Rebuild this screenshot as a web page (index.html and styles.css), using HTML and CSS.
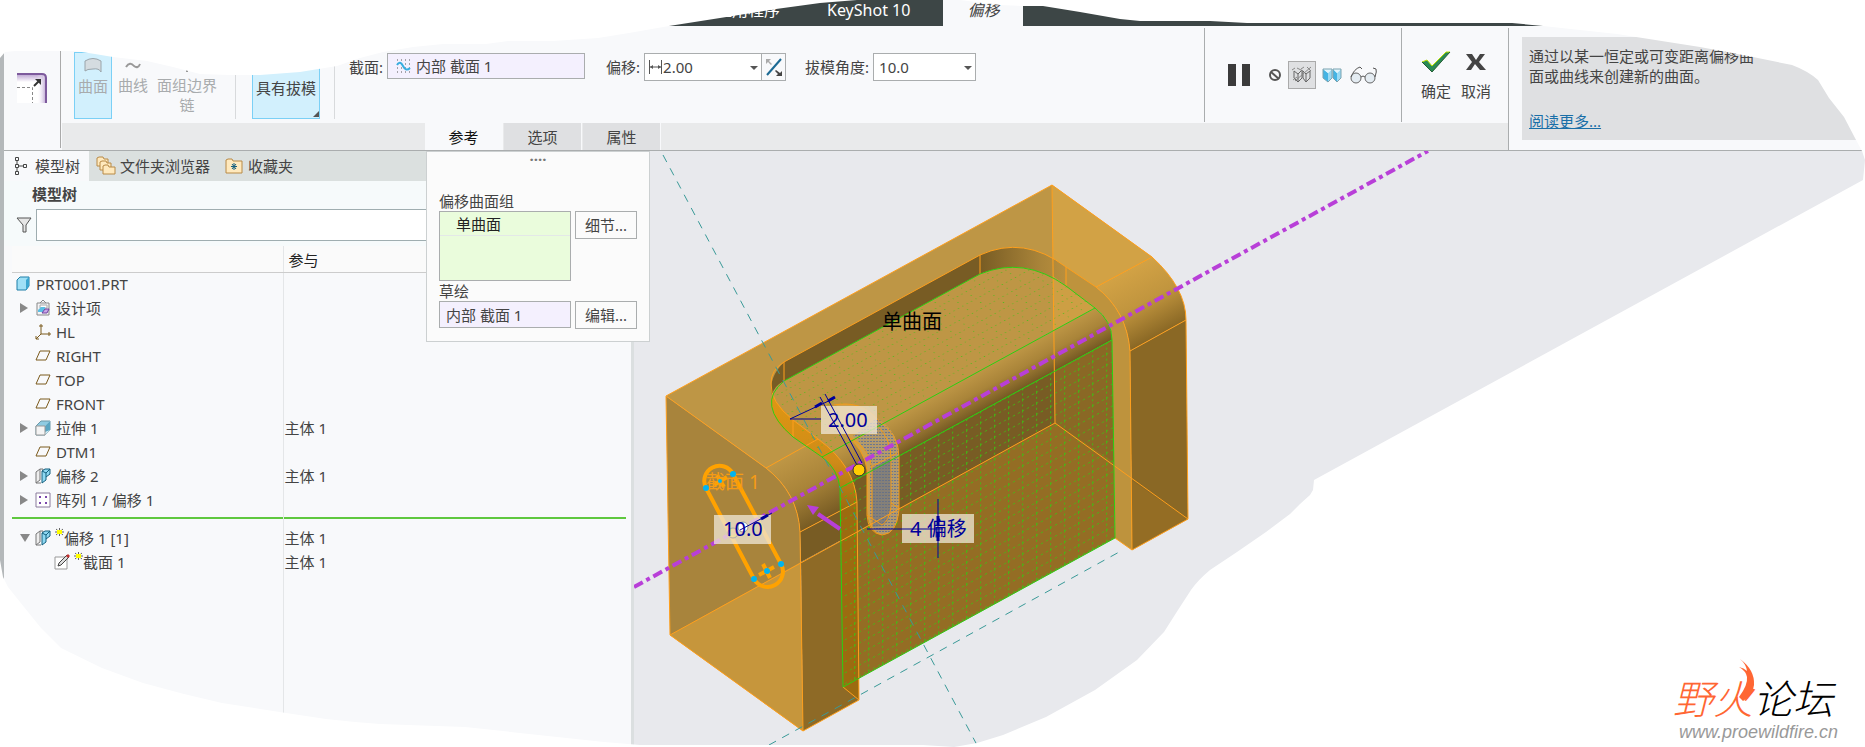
FILE: index.html
```html
<!DOCTYPE html>
<html lang="zh-CN">
  <head>
    <meta charset="UTF-8" />
    <title>偏移</title>
    <meta name="viewport" content="width=device-width, initial-scale=1" />
    <link rel="stylesheet" href="styles.css">
  </head>
  <body>
    <div class="app">
      <nav class="titlebar">
        <button class="title-tab">应用程序</button>
        <button class="title-tab">KeyShot 10</button>
        <button class="title-tab active">偏移</button>
      </nav>

      <header class="ribbon">
        <div class="feature-icon">
          <svg width="30" height="30" viewBox="0 0 30 30">
            <defs>
              <linearGradient id="edgeV" x1="0" x2="0" y1="0" y2="1"><stop offset="0" stop-color="#b9a0d0"/><stop offset="1" stop-color="#fff"/></linearGradient>
              <linearGradient id="edgeH" x1="1" x2="0" y1="0" y2="0"><stop offset="0" stop-color="#b9a0d0"/><stop offset="1" stop-color="#fff" stop-opacity="0"/></linearGradient>
            </defs>
            <path d="M0 0h26q4 0 4 4v26H0z" fill="#fff"/>
            <path d="M0 1h26v8H0z" fill="url(#edgeV)"/>
            <path d="M20 2h9v28h-9z" fill="url(#edgeH)"/>
            <path d="M0 1h25q4 0 4 4v25" fill="none" stroke="#7d5a9c" stroke-width="2"/>
            <path d="M0 14.500h15.500V30" fill="none" stroke="#888" stroke-dasharray="3 2"/>
            <path d="M17 13l5-5" stroke="#333" stroke-width="2"/>
            <path d="M18 6h6v6z" fill="#333"/>
          </svg>
        </div>

        <div class="dashboard">
          <div class="controls">
            <div class="buttons">
              <button class="tool on" disabled>
                <svg width="18" height="16" viewBox="0 0 18 16"><path d="M1 4q8-5 16 0v11q-2-4-8-3-6 0-8 2z" fill="#d5dce0" stroke="#9aa4aa"/></svg>
                曲面
              </button>
              <button class="tool" disabled>
                <svg width="18" height="16" viewBox="0 0 18 16"><path d="M2 11q4-6 8-1 4 3 6-2" fill="none" stroke="#999" stroke-width="2"/></svg>
                曲线
              </button>
              <button class="tool wide" disabled>
                <svg width="18" height="16" viewBox="0 0 18 16"><path d="M9 13v3" stroke="#999" stroke-width="2"/></svg>
                面组边界链
              </button>
            </div>
            <div class="buttons">
              <button class="tool on draft">具有拔模</button>
            </div>
            <div class="fields">
              <label for="section">截面:</label>
              <div class="collector section">
                <svg width="15" height="15" viewBox="0 0 15 15"><path d="M1 1h14M1 5h14M1 9h14M1 13h14" stroke="#555" stroke-dasharray="1 3"/><path d="M1 6q3-5 6 1 3 6 7 2" fill="none" stroke="#37aee0" stroke-width="2"/></svg>
                <input id="section" value="内部 截面 1" readonly>
              </div>
              <label for="offset">偏移:</label>
              <div class="combo offset">
                <svg width="15" height="16" viewBox="0 0 15 16"><path d="M1.500 1v14M13.500 1v14M2 8h11" fill="none" stroke="#555"/><path d="M2 8l3-2v4zM13 8l-3-2v4z" fill="#555"/></svg>
                <select id="offset"><option>2.00</option></select>
              </div>
              <button class="flip" aria-label="反向">
                <svg width="18" height="20" viewBox="0 0 18 20"><path d="M2 18L16 2" stroke="#1c6a94" stroke-width="2"/><path d="M1 2h5l-2 2 3 3-1 1-3-3-2 2z" fill="#aaa"/><path d="M17 19h-6l2-2-3-3 1-1 4 3 2-2z" fill="#444"/></svg>
              </button>
              <label for="angle">拔模角度:</label>
              <div class="combo angle">
                <select id="angle"><option>10.0</option></select>
              </div>
            </div>

            <div class="preview">
              <button aria-label="暂停"><svg width="22" height="22" viewBox="0 0 22 22"><path d="M0 0h8v22H0zM14 0h8v22h-8z" fill="#3b3b3b"/></svg></button>
              <button aria-label="无预览"><svg width="14" height="14" viewBox="0 0 14 14"><circle cx="7" cy="7" r="5" fill="none" stroke="#555" stroke-width="2"/><path d="M3 4l8 7" stroke="#555" stroke-width="2"/></svg></button>
              <button class="pressed" aria-label="分离"><svg width="20" height="18" viewBox="0 0 20 18"><path d="M2 5l4 3v8l-4-4zM6 8l4-4v8l-4 4M11 5l3 3v8l-3-4zM14 8l4-3v7l-4 4" fill="none" stroke="#666"/><path d="M0 4l3-2M5 2l6 3M9 3l3-2M15 1l4 4M3 15L19 1M1 14l4-3" fill="none" stroke="#888"/></svg></button>
              <button aria-label="连接"><svg width="20" height="15" viewBox="0 0 20 15"><path d="M1 1l5 4v9l-5-4zM11 1l4 4v9l-4-4z" fill="#45b4e4"/><path d="M6 5l4-4v9l-4 4zM15 5l4-4v9l-4 4z" fill="#9bdaf4"/><path d="M1 1h9l-4 4zM11 1h8l-4 4z" fill="#e3f5fc"/><path d="M1 1h9v9l-4 4-5-4zM11 1h8v9l-4 4-4-4z" fill="none" stroke="#7ba3b0"/></svg></button>
              <button aria-label="验证"><svg width="28" height="18" viewBox="0 0 28 18"><g fill="#e4ecf2" stroke="#666"><circle cx="6" cy="12" r="5"/><circle cx="20" cy="12" r="5"/></g><path d="M11 11q2-2 4 0M1 11Q4 3 10 1l2 2M25 11q2-6 1-8l-3-1" fill="none" stroke="#555"/></svg></button>
            </div>
            <div class="finish">
              <button>
                <svg width="30" height="22" viewBox="0 0 30 22"><path d="M1 11l5-2 5 6L25 1h4L11 21z" fill="#2a8a55"/><path d="M1 11l5-2 5 6L25 1h4" fill="none" stroke="#b7e000" stroke-width="1"/><path d="M29 1L11 21 1 11" fill="none" stroke="#255d35"/></svg>
                确定
              </button>
              <button>
                <svg width="22" height="22" viewBox="0 0 22 22"><path d="M1 3h6l4 6 4-6h5l-6 8 7 8h-6l-5-6-4 6H1l6-8z" fill="#444"/></svg>
                取消
              </button>
            </div>
          </div>
          <div class="panel-tabs">
            <button class="active">参考</button>
            <button>选项</button>
            <button>属性</button>
          </div>
        </div>

        <aside class="help">
          <div class="help-box">
            <p>通过以某一恒定或可变距离偏移曲面或曲线来创建新的曲面。</p>
            <a href="#help">阅读更多...</a>
          </div>
        </aside>
      </header>

      <main class="workspace">
        <section class="navigator">
          <div class="nav-tabs">
            <button class="active">
              <svg width="14" height="20" viewBox="0 0 14 20"><path d="M1.500 1.500h3v3h-3zM1.500 8.500h3v3h-3zM1.500 15.500h3v3h-3zM9.500 8.500h3v3h-3zM3 5v3M3 12v3M5 10h4" fill="none" stroke="#444"/></svg>
              模型树
            </button>
            <button>
              <svg width="20" height="20" viewBox="0 0 20 20"><g fill="#ffe9bd" stroke="#b88a46"><path d="M1 10V2l2-1h4l1 2h4v7z"/><path d="M4 14V6l2-1h4l1 2h4v7z"/><path d="M7 18v-8l2-1h3l1 2h6v7z"/></g></svg>
              文件夹浏览器
            </button>
            <button>
              <svg width="18" height="20" viewBox="0 0 18 20"><path d="M1 17V4l2-1h4l1 2h9v12z" fill="#ffe9bd" stroke="#b88a46"/><path d="M9 7v7M6 10.500h6M7 8l4 5M11 8l-4 5" stroke="#166080"/></svg>
              收藏夹
            </button>
          </div>
          <h1>模型树</h1>
          <div class="filter">
            <svg width="16" height="16" viewBox="0 0 16 16"><path d="M1 1h14L10 8v7H7V8z" fill="#e6e6e6" stroke="#555"/></svg>
            <input type="text" aria-label="筛选">
          </div>
          <div class="tree">
            <table>
              <colgroup><col class="col-name"><col></colgroup>
              <thead>
                <tr><th></th><th>参与</th></tr>
              </thead>
              <tbody>
                <tr><td><div class="node root"><svg class="icon" viewBox="0 0 16 16"><path d="M2 4l3-3h9v9l-3 4H2z" fill="#9fe0f6" stroke="#1e7fa8"/><path d="M11 4l3-3v9l-3 4z" fill="#3aa6d0"/></svg>PRT0001.PRT</div></td><td></td></tr>
                <tr><td><div class="node"><i class="arrow"></i><svg class="icon" viewBox="0 0 16 16"><path d="M2 3h12v12H2z" fill="#f4f4f6" stroke="#888"/><path d="M5 3l3-3 3 3" fill="none" stroke="#888"/><path d="M5 5h7v3H5z" fill="#fff" stroke="#aaa"/><path d="M3 10l3-3h4v2l-2 3H3z" fill="#5bbfe4"/><path d="M7 13l3-4h4l-2 4z" fill="#c9a8e8" stroke="#7140a0"/></svg>设计项</div></td><td></td></tr>
                <tr><td><div class="node"><i class="arrow none"></i><svg class="icon" viewBox="0 0 16 16"><path d="M6 0v10h10M6 10l-5 5M4 2h4M14 8v4M1 12v3h3" fill="none" stroke="#7b5a1c"/></svg>HL</div></td><td></td></tr>
                <tr><td><div class="node"><i class="arrow none"></i><svg class="icon" viewBox="0 0 16 16"><path d="M5 3h10l-4 9H1z" fill="none" stroke="#7b5a1c"/></svg>RIGHT</div></td><td></td></tr>
                <tr><td><div class="node"><i class="arrow none"></i><svg class="icon" viewBox="0 0 16 16"><path d="M5 3h10l-4 9H1z" fill="none" stroke="#7b5a1c"/></svg>TOP</div></td><td></td></tr>
                <tr><td><div class="node"><i class="arrow none"></i><svg class="icon" viewBox="0 0 16 16"><path d="M5 3h10l-4 9H1z" fill="none" stroke="#7b5a1c"/></svg>FRONT</div></td><td></td></tr>
                <tr><td><div class="node"><i class="arrow"></i><svg class="icon" viewBox="0 0 16 16"><path d="M1 6l5-5h9v9l-5 5H1z" fill="#8fcbe2" stroke="#6b98a8"/><path d="M10 6l5-5v9l-5 5z" fill="#d5eef6"/><path d="M10 6l5-5v9l-5 2z" fill="#5aa5c2"/><path d="M1 6h9v9H1z" fill="#f4f4f4" stroke="#999"/></svg>拉伸 1</div></td><td>主体 1</td></tr>
                <tr><td><div class="node"><i class="arrow none"></i><svg class="icon" viewBox="0 0 16 16"><path d="M5 3h10l-4 9H1z" fill="none" stroke="#7b5a1c"/></svg>DTM1</div></td><td></td></tr>
                <tr><td><div class="node"><i class="arrow"></i><svg class="icon" viewBox="0 0 16 16"><path d="M1 4l4-3v11l-4 3z" fill="#eee" stroke="#777"/><path d="M1 15h5M5 1h3v3" fill="none" stroke="#777"/><path d="M7 3l3-2h5v5l-4 3v3l-4 3z" fill="#8ed8f2" stroke="#15607f"/><path d="M7 3l4 2v4M11 5l4-4" fill="none" stroke="#15607f"/></svg>偏移 2</div></td><td>主体 1</td></tr>
                <tr><td><div class="node"><i class="arrow"></i><svg class="icon" viewBox="0 0 16 16"><path d="M1 1h14v14H1z" fill="#fff" stroke="#8a7a9c"/><path d="M4 4h2v2H4zM10 4h2v2h-2zM4 10h2v2H4zM10 10h2v2h-2z" fill="#7b48ac"/></svg>阵列 1 / 偏移 1</div></td><td></td></tr>
                <tr class="insert-here"><td></td><td></td></tr>
                <tr><td><div class="node"><i class="arrow open"></i><svg class="icon" viewBox="0 0 16 16"><path d="M1 4l4-3v11l-4 3z" fill="#eee" stroke="#777"/><path d="M1 15h5M5 1h3v3" fill="none" stroke="#777"/><path d="M7 3l3-2h5v5l-4 3v3l-4 3z" fill="#8ed8f2" stroke="#15607f"/><path d="M7 3l4 2v4M11 5l4-4" fill="none" stroke="#15607f"/></svg><svg class="new" viewBox="0 0 9 16"><path d="M4.500 0v8M0 4h9M1 1l7 6M8 1L1 7" stroke="#666"/><path d="M2 2h5v4H2z" fill="#ff0"/></svg>偏移 1 [1]</div></td><td>主体 1</td></tr>
                <tr><td><div class="node child"><svg class="icon" viewBox="0 0 16 16"><path d="M1 3h12v12H1z" fill="#fff" stroke="#999"/><path d="M4 12l1-3 8-8 2 2-8 8z" fill="#ddd" stroke="#444"/><path d="M12 2l2-2 2 2-2 2z" fill="#c03030"/></svg><svg class="new" viewBox="0 0 9 16"><path d="M4.500 0v8M0 4h9M1 1l7 6M8 1L1 7" stroke="#666"/><path d="M2 2h5v4H2z" fill="#ff0"/></svg>截面 1</div></td><td>主体 1</td></tr>
                <tr class="rest"><td></td><td></td></tr>
              </tbody>
            </table>
          </div>
        </section>

        <section class="viewport">
          <svg class="model" viewBox="634 151 1231 596" preserveAspectRatio="xMinYMin slice">
            <defs>
              <linearGradient id="frontBend" gradientUnits="userSpaceOnUse" x1="822" y1="457" x2="839" y2="488">
                <stop offset="0" stop-color="#be9645"/><stop offset="0.5" stop-color="#a98439"/><stop offset="1" stop-color="#785c24"/>
              </linearGradient>
              <linearGradient id="rightBend" gradientUnits="userSpaceOnUse" x1="1096" y1="287" x2="1130" y2="350">
                <stop offset="0" stop-color="#d2a245"/><stop offset="0.5" stop-color="#c1953e"/><stop offset="1" stop-color="#8a6825"/>
              </linearGradient>
              <linearGradient id="leftBend" gradientUnits="userSpaceOnUse" x1="766" y1="468" x2="800" y2="531">
                <stop offset="0" stop-color="#be9645"/><stop offset="0.5" stop-color="#a98439"/><stop offset="1" stop-color="#785c24"/>
              </linearGradient>
              <linearGradient id="backCorner" gradientUnits="userSpaceOnUse" x1="980" y1="0" x2="1066" y2="0">
                <stop offset="0" stop-color="#785c24"/><stop offset="0.7" stop-color="#a98439"/><stop offset="1" stop-color="#b98f3e"/>
              </linearGradient>
              <linearGradient id="strip" gradientUnits="userSpaceOnUse" x1="0" y1="390" x2="0" y2="510">
                <stop offset="0" stop-color="#e09812"/><stop offset="0.6" stop-color="#cf8b18"/><stop offset="1" stop-color="#9c6b10"/>
              </linearGradient>
              <pattern id="gridFront" width="14" height="11" patternUnits="userSpaceOnUse" patternTransform="translate(840 488) skewY(-28.6)">
                <path d="M0.500 0v11" stroke="#3ac411" stroke-dasharray="2 3"/>
                <path d="M0 0.500h14" stroke="#3ac411" stroke-dasharray="2 3"/>
              </pattern>
              <pattern id="gridTop" width="15" height="12" patternUnits="userSpaceOnUse" patternTransform="matrix(0.878 -0.479 0.8 0.6 822 457)">
                <path d="M0.500 0v12" stroke="#3ac411" stroke-dasharray="1 5"/>
                <path d="M0 0.500h15" stroke="#3ac411" stroke-dasharray="1 4"/>
              </pattern>
              <pattern id="mesh" width="3" height="3" patternUnits="userSpaceOnUse">
                <rect width="3" height="3" fill="#b39a6c"/><rect width="2" height="1" fill="#6b7690"/>
              </pattern>
            </defs>

            <!-- outer block -->
            <path d="M666 396L1052 185L1152 257L1096 287L857 502L766 468z" fill="#be9645"/>
            <path d="M1052 185L1152 257L1096 287L1066 267L1053 260z" fill="#d2a245"/>
            <path d="M666 396L766 468Q798 493 800 532L803 731L670 635z" fill="#a8843c"/>
            <path d="M670 635L801 562L803 731z" fill="#c6963c"/>
            <path d="M766 468L818 439Q855 466 857 502L800 532Q798 493 766 468z" fill="url(#leftBend)"/>
            <path d="M800 532L857 502L858 531L801 562z" fill="#785c24"/>
            <path d="M801 562L858 531L859 700L803 731z" fill="#8e6a26"/>
            <path d="M1096 287L1152 257Q1186 288 1186 320L1130 351Q1127 311 1096 287z" fill="url(#rightBend)"/>
            <path d="M1130 351L1186 320L1188 519L1132 550z" fill="#8a6825"/>
            <path d="M1131 480L1188 519L1132 550z" fill="#946d24"/>

            <!-- pocket walls and offset surface -->
            <path d="M784 362L980 255V274L784 381Q774 386 772 395Q768 378 784 362z" fill="#785c24"/>
            <path d="M980 255Q1024 235 1066 267V286Q1024 256 980 274z" fill="url(#backCorner)"/>
            <path d="M1066 267L1096 287Q1127 311 1130 351L1132 550L1115 538L1112 340Q1112 321 1095 308L1066 286z" fill="#be933d"/>
            <path d="M784 381L980 274Q1024 256 1066 286L1095 308L822 457L784 417Q760 398 784 381z" fill="#be9645"/>
            <path d="M1053 276L1066 286L1095 308L1054 330z" fill="#cd9f44"/>
            <path d="M822 457L1095 308Q1112 321 1112 340L840 488Q838 469 822 457z" fill="url(#frontBend)"/>
            <path d="M840 488L1112 340L1115 538L843 687z" fill="#946d24"/>
            <path d="M840 488L1054 371L1055 423L841 540z" fill="#785c24"/>
            <path d="M1054 371L1112 340L1114 462L1055 423z" fill="#8a6825"/>
            <path d="M772 395Q778 406 793 420L818 439Q855 466 857 502L859 700L843 687L840 488Q838 469 822 457L793 437Q768 419 772 395z" fill="url(#strip)"/>
            <path d="M784 381L980 274Q1024 256 1066 286L1095 308L822 457L793 420L775 400Q774 388 784 381z" fill="url(#gridTop)" opacity="0.8"/>
            <path d="M840 488L1112 340L1115 538L843 687z" fill="url(#gridFront)" opacity="0.8"/>

            <!-- slot preview -->
            <path d="M836 404Q862 402 877 418Q899 432 899 457V510Q897 533 882 535Q867 532 867 508V470Q864 450 845 434z" fill="#cfa04a"/>
            <path d="M853 436L877 418Q899 432 899 457V510Q897 533 882 535Q869 530 870 508V465Q866 446 853 436z" fill="url(#mesh)"/>
            <path d="M872 468L891 458V507Q890 522 882 526L872 527z" fill="#657080" opacity="0.6"/>
            <g fill="none" stroke="#f59b16" stroke-width="1">
              <path d="M834 405Q862 400 878 420Q899 434 899 457V510Q897 534 882 535Q868 533 867 515V470Q865 450 845 434"/>
              <path d="M849 437Q871 449 872 470V527M853 441L878 426M878 426Q891 440 891 458V507Q889 521 882 525L867 515M871 467L897 453M891 503L899 508"/>
            </g>

            <!-- edges -->
            <g fill="none" stroke="#ff9f1c" stroke-width="1">
              <path d="M666 396L1052 185L1152 257Q1186 288 1186 320L1188 519L1132 550L1115 538M666 396L766 468Q798 493 800 532L803 731L670 635z"/>
              <path d="M803 731L859 700L843 687M859 700L857 502Q855 466 818 439L793 420Q770 402 771 383Q771 370 784 362L980 255Q1024 235 1066 267L1096 287Q1127 311 1130 351L1132 550"/>
              <path d="M766 468L818 439M800 532L857 502M1096 287L1152 257M1130 351L1186 320M1052 185L1055 423L1188 519M1055 423L670 635M980 255V274M784 362V381M1066 267V286M793 420V437"/>
            </g>
            <g fill="none" stroke="#2bd012" stroke-width="1">
              <path d="M784 381L980 274Q1024 256 1066 286L1095 308Q1112 321 1112 340L1115 538L843 687L840 488Q838 469 822 457L793 437Q755 404 784 381"/>
              <path d="M822 457L1095 308M840 488L1112 340"/>
            </g>
            <g fill="none" stroke="#3a9a98" stroke-width="1" stroke-dasharray="8 7">
              <path d="M663 155L977 745"/>
              <path d="M769 745L1121 551"/>
            </g>

            <!-- sketch -->
            <g fill="none" stroke="#ffa200" stroke-width="4">
              <path d="M706 488A15 15 0 0 1 733 474L781 564A15 15 0 0 1 754 579z"/>
              <path d="M759 575L774 567M763 564L770 578M714 485L727 477M717 475L724 487"/>
            </g>
            <text class="sketch-name" x="706" y="489">截面 1</text>
            <g fill="#00b4f0">
              <circle cx="706" cy="488" r="3"/><circle cx="733" cy="474" r="3"/><circle cx="720" cy="481" r="2"/>
              <circle cx="754" cy="579" r="3"/><circle cx="781" cy="564" r="3"/><circle cx="767" cy="571" r="3"/>
            </g>

            <path d="M634 587L1428 151" stroke="#b83fd8" stroke-width="4" stroke-dasharray="10 4 4 4" fill="none"/>
            <path d="M840 529L818 514" stroke="#b83fd8" stroke-width="4"/>
            <path d="M807 505l12 2-6 8z" fill="#b83fd8"/>
            <text class="surface-name" x="882" y="329">单曲面</text>

            <!-- dimensions -->
            <g fill="#f0e8d8" fill-opacity="0.75">
              <rect x="821" y="406" width="56" height="28"/>
              <rect x="714" y="515" width="57" height="29"/>
              <rect x="902" y="514" width="72" height="29"/>
            </g>
            <circle cx="743" cy="527" r="5" fill="#fff" stroke="#999"/>
            <circle cx="733" cy="533" r="5" fill="#f2e49a" stroke="#aaa" fill-opacity="0.6"/>
            <g fill="none" stroke="#00009a">
              <path d="M820 397L857 465M825 394L862 463M790 419L835 398M790 419H821M740 530L772 513M938 499V558M867 529H943"/>
              <path d="M815 407l7-4M828 401l7-4M761 519l7-4M938 516v9M938 533v8" stroke-width="3"/>
            </g>
            <circle cx="859" cy="470" r="6" fill="#fc0" stroke="#333"/>
            <g class="dim">
              <text x="828" y="427">2.00</text>
              <text x="723" y="536">10.0</text>
              <text x="910" y="536">4 偏移</text>
            </g>
          </svg>
        </section>

        <form class="popup">
          <div class="grip">····</div>
          <label for="surfaces">偏移曲面组</label>
          <div class="popup-row">
            <select id="surfaces" size="3"><option>单曲面</option></select>
            <button type="button">细节...</button>
          </div>
          <label for="sketch">草绘</label>
          <div class="popup-row">
            <input id="sketch" value="内部 截面 1" readonly>
            <button type="button">编辑...</button>
          </div>
        </form>
      </main>
    </div>

    <!-- torn edge around the window -->
    <svg class="torn" viewBox="0 0 1865 747" preserveAspectRatio="none">
      <path fill="#fff" fill-rule="evenodd" d="M0 0H1865V747H0z
        M0 58L5 52L15 51H75L95 54L113 57L147 61L173 67L200 74L230 75H260L300 72L337 66L360 58L383 52L413 47L443 44L486 44L508 41H553L598 38L629 33L669 26L720 18L776 9L820 3L857 0H960L1000 5L1023 6H1043L1080 12L1120 19L1140 21H1210L1247 23H1512L1543 26L1617 34L1700 47L1748 56L1792 65Q1808 71 1818 80L1829 98L1844 117L1855 138L1862 151L1865 160L1863 180L1314 480L1313 490L1310 495L1300 504L1290 514L1266 532L1237 552L1210 570Q1198 580 1191 590L1178 610L1164 632L1137 660L1095 690L1046 717L1003 735L977 743L954 747L923 745H640L604 742L465 727L380 724L355 722L326 719L286 713L222 703L184 694L143 683L102 668L61 648L41 628L24 607L8 587L3 577L0 560z"/>
    </svg>

    <footer class="watermark">
      <div class="brand">
        <span class="fire">野火</span>论坛
        <svg class="flame" width="20" height="44" viewBox="0 0 20 44"><path d="M3 0Q18 11 17 26Q16 36 6 42L2 38Q11 26 10 18Q9 12 2 8Q7 9 10 12Q9 5 3 0z" fill="#ff6633"/></svg>
      </div>
      <div class="site">www.proewildfire.cn</div>
    </footer>
  </body>
</html>
```
FILE: styles.css
```css
* {
  box-sizing: border-box;
}

body {
  margin: 0;
  background: #fff;
  color: #444;
  font: 15px/20px "Noto Sans", "Noto Sans CJK SC", sans-serif;
  overflow: hidden;
}

button,
input,
select {
  font: inherit;
  color: inherit;
  border: 0;
  border-radius: 0;
  margin: 0;
  padding: 0;
  background: none;
}

.app {
  display: flex;
  flex-direction: column;
  height: 100vh;
  border-left: 4px solid #b4b8ba;
  background: #f8f9fb;
}

/* title tabs */
.titlebar {
  display: flex;
  height: 26px;
  padding-left: 680px;
  background: #3d4646;
}

.title-tab {
  padding: 0 33px 6px;
  color: #fff;
  font-size: 16px;
}

.title-tab:first-child {
  padding: 0 14px 6px 32px;
}

.title-tab.active {
  width: 80px;
  padding: 0 0 6px;
  background: #f8f9fb;
  color: #444;
  font-style: italic;
}

/* ribbon */
.ribbon {
  display: flex;
  height: 125px;
  border-bottom: 1px solid #aaadae;
}

.feature-icon {
  width: 57px;
  height: 122px;
  padding: 47px 13px;
  border-right: 1px solid #aaa;
}

.dashboard {
  flex: 1;
  display: flex;
  flex-direction: column;
  margin-left: 1px;
}

.controls {
  display: flex;
  height: 97px;
}

.buttons {
  display: flex;
  align-items: flex-end;
  gap: 2px;
  height: 93px;
  padding: 0 15px 0 12px;
  border-right: 1px solid #d8dadc;
}

.buttons + .buttons {
  padding: 0 14px 0 16px;
}

.tool {
  display: flex;
  flex-direction: column;
  align-items: center;
  gap: 3px;
  width: 38px;
  height: 67px;
  padding-top: 4px;
}

.tool:disabled {
  color: #a8abad;
}

.tool.wide {
  width: 66px;
}

.tool.on {
  border: 1px solid #7bd0f6;
  background: #d2f0fd;
}

.tool.draft {
  position: relative;
  width: 68px;
  height: 90px;
  justify-content: flex-end;
  padding: 0 0 20px;
  white-space: nowrap;
}

.draft::after {
  content: "";
  position: absolute;
  right: 0;
  bottom: 1px;
  border-bottom: 6px solid #555;
  border-left: 6px solid transparent;
}

.fields {
  flex: 1;
  display: flex;
  align-items: flex-start;
  padding: 27px 0 0 14px;
}

.fields label {
  padding: 4px 4px 0 0;
}

.collector,
.combo {
  display: flex;
  align-items: center;
  height: 28px;
  border: 1px solid #aaadae;
  background: #fff;
}

.collector {
  gap: 5px;
  width: 198px;
  height: 26px;
  margin-right: 21px;
  padding-left: 8px;
  background: #f4f0fe;
}

.collector input {
  width: 150px;
}

.combo {
  position: relative;
  padding-left: 3px;
}

.combo select {
  flex: 1;
  appearance: none;
}

.combo::after {
  content: "";
  position: absolute;
  right: 3px;
  top: 12px;
  border: 4px solid transparent;
  border-top-color: #555;
}

.offset {
  width: 118px;
}

.angle {
  width: 103px;
  padding-left: 5px;
}

.flip {
  width: 24px;
  height: 28px;
  margin-right: 19px;
  border: 1px solid #aaadae;
  border-left: 0;
  padding: 3px 0 0;
}

.preview {
  display: flex;
  align-items: center;
  gap: 8px;
  width: 197px;
  height: 94px;
  margin-top: 2px;
  padding: 0 10px 0 23px;
  border-left: 1px solid #aaadae;
}

.preview button {
  height: 28px;
  line-height: 0;
}

.preview button:first-child {
  margin-right: 10px;
}

.preview .pressed {
  width: 28px;
  margin: 0 -2px;
  border: 1px solid #aaa;
  background: #dfe0e2;
}

.finish {
  display: flex;
  gap: 10px;
  width: 107px;
  height: 94px;
  margin-top: 2px;
  padding: 23px 17px 0 19px;
  border-left: 1px solid #aaadae;
}

.finish button {
  display: flex;
  flex-direction: column;
  align-items: center;
  gap: 8px;
  width: 30px;
}

.panel-tabs {
  display: flex;
  gap: 1px;
  height: 27px;
  padding-left: 363px;
  background: #e9eaeb;
}

.panel-tabs button {
  width: 78px;
  background: #dfe0e2;
  border-right: 1px solid #f8f9fb;
}

.panel-tabs .active {
  background: #f8f9fb;
  color: #111;
}

.help {
  width: 357px;
  margin-top: 2px;
  padding: 9px 0 9px 13px;
  border-left: 1px solid #aaadae;
}

.help-box {
  height: 103px;
  padding: 9px 107px 0 7px;
  background: #dfe0e2;
}

.help p {
  width: 226px;
  margin: 0 0 25px;
}

.help a {
  color: #1a6fa8;
}

/* model tree */
.workspace {
  flex: 1;
  display: flex;
  position: relative;
  min-height: 0;
}

.navigator {
  display: flex;
  flex-direction: column;
  width: 630px;
  border-right: 3px solid #dbdfe0;
}

.nav-tabs {
  display: flex;
  height: 30px;
  background: #dbe0df;
}

.nav-tabs button {
  display: flex;
  align-items: center;
  gap: 4px;
  padding: 0 8px 0 7px;
}

.nav-tabs .active {
  gap: 7px;
  padding: 0 9px 0 10px;
  background: #f8f9fb;
}

.nav-tabs button:last-child {
  gap: 5px;
}

.navigator h1 {
  margin: 0;
  padding: 3px 28px 5px;
  background: #f6fafb;
  font-size: 15px;
  font-weight: bold;
  line-height: 20px;
}

.filter {
  display: flex;
  align-items: center;
  gap: 4px;
  padding: 0 8px 5px 12px;
  background: #f6fafb;
}

.filter input {
  flex: 1;
  height: 32px;
  border: 1px solid #9fadb0;
  background: #fff;
}

.tree {
  flex: 1;
  min-height: 0;
  overflow: hidden;
  padding: 0 5px 0 8px;
}

table {
  width: 100%;
  border-collapse: collapse;
  table-layout: fixed;
}

.col-name {
  width: 271px;
}

th,
td {
  height: 24px;
  padding: 0;
  font-weight: normal;
  text-align: left;
}

th {
  height: 26px;
  padding-top: 3px;
  border-bottom: 1px solid #ccc;
  background: #fafafa;
  color: #222;
}

th + th,
td + td {
  border-left: 1px solid #e4e6e8;
}

th + th {
  padding-left: 5px;
}

td + td {
  padding-left: 1px;
}

.node {
  display: flex;
  align-items: center;
  gap: 5px;
  padding-left: 8px;
}

.root {
  padding-left: 3px;
}

.child {
  padding-left: 42px;
}

.icon {
  width: 16px;
  height: 16px;
}

.arrow {
  width: 10px;
  border: 5px solid transparent;
  border-left: 8px solid #888;
  border-right: 0;
}

.arrow.none {
  border-color: transparent;
}

.arrow.open {
  border: 5px solid transparent;
  border-top: 8px solid #888;
  border-bottom: 0;
}

.new {
  width: 9px;
  height: 16px;
  margin: 0 -5px 4px -1px;
}

.insert-here td {
  height: 14px;
  background: linear-gradient(#5fc83f, #5fc83f) 0 5px / 100% 2px no-repeat;
}

.rest td {
  height: 300px;
}

/* graphics window */
.viewport {
  flex: 1;
  min-width: 0;
  background: #e8e9ed;
}

.model {
  display: block;
  width: 100%;
  height: 100%;
}

.sketch-name,
.surface-name,
.dim {
  font-size: 20px;
}

.sketch-name {
  font-size: 19px;
  fill: #f59b16;
}

.surface-name {
  fill: #000;
}

.dim {
  fill: #00009a;
}

/* references panel */
.popup {
  position: absolute;
  left: 422px;
  top: 0;
  width: 224px;
  padding: 0 12px 12px;
  border: 1px solid #ccd0d1;
  background: #fbfbfb;
}

.popup label {
  display: block;
}

.grip {
  height: 39px;
  line-height: 14px;
  text-align: center;
  font-weight: bold;
  color: #777;
}

.popup-row {
  display: flex;
  align-items: flex-start;
  justify-content: space-between;
}

.popup button {
  width: 62px;
  height: 28px;
  border: 1px solid #aaadae;
}

.popup select {
  width: 132px;
  height: 70px;
  border: 1px solid #aaadae;
  background: #eafcdc;
  color: #222;
  overflow: hidden;
}

.popup option {
  padding: 1px 16px;
  border-bottom: 1px solid #e4e8e8;
}

.popup input {
  width: 132px;
  height: 27px;
  padding-left: 6px;
  border: 1px solid #aaadae;
  background: #f4f0fe;
}

.torn {
  position: absolute;
  left: 0;
  top: 0;
  width: 100%;
  height: 100%;
  pointer-events: none;
}

/* site mark */
.watermark {
  position: absolute;
  right: 22px;
  bottom: 6px;
  width: 164px;
  color: #000;
}

.brand {
  position: relative;
  margin-left: -6px;
  font-size: 40px;
  line-height: 48px;
  font-style: italic;
  font-weight: 300;
  white-space: nowrap;
}

.fire {
  color: #ff6633;
}

.flame {
  position: absolute;
  left: 64px;
  top: -16px;
}

.site {
  color: #999;
  font: italic 18px/18px "Liberation Sans", sans-serif;
}
```
